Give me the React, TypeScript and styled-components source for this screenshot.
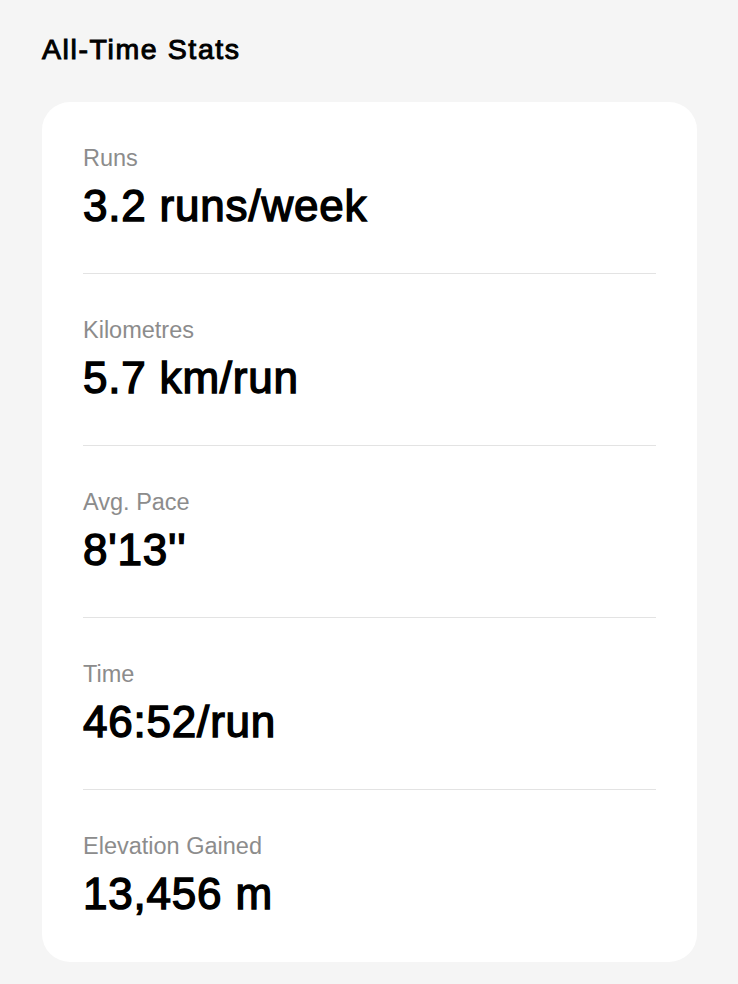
import React from "react";
import styled, { createGlobalStyle } from "styled-components";

const GlobalStyle = createGlobalStyle`
  html, body {
    margin: 0;
    padding: 0;
    background: #f5f5f5;
  }
  body {
    font-family: "Liberation Sans", Arial, Helvetica, sans-serif;
    -webkit-font-smoothing: antialiased;
  }
`;

const Page = styled.main`
  box-sizing: border-box;
  width: 738px;
  min-height: 984px;
  padding: 32px 41px 0 42px;
  background: #f5f5f5;
  display: flex;
  flex-direction: column;
`;

const Title = styled.h1`
  margin: 0 0 36px;
  font-size: 28.5px;
  line-height: 34px;
  font-weight: 400;
  color: #000;
  letter-spacing: 1.6px;
  -webkit-text-stroke: 1px #000;
`;

const Card = styled.section`
  background: #ffffff;
  border-radius: 28px;
  padding: 0 41px 42px;
  display: flex;
  flex-direction: column;
`;

const Row = styled.div<{ $last?: boolean }>`
  padding: 42px 0 ${(p) => (p.$last ? "0" : "41px")};
  border-bottom: ${(p) => (p.$last ? "none" : "1px solid #e3e3e3")};
  display: flex;
  flex-direction: column;
  gap: 8px;
`;

const Label = styled.div`
  font-size: 23.5px;
  line-height: 28px;
  color: #8c8c8c;
  font-weight: 400;
`;

const Value = styled.div`
  font-size: 44px;
  line-height: 52px;
  color: #000;
  font-weight: 400;
  letter-spacing: 0.8px;
  -webkit-text-stroke: 1.4px #000;
`;

const stats = [
  { label: "Runs", value: "3.2 runs/week" },
  { label: "Kilometres", value: "5.7 km/run" },
  { label: "Avg. Pace", value: "8'13''" },
  { label: "Time", value: "46:52/run" },
  { label: "Elevation Gained", value: "13,456 m" },
];

export default function App() {
  return (
    <>
      <GlobalStyle />
      <Page>
        <Title>All-Time Stats</Title>
        <Card>
          {stats.map((s, i) => (
            <Row key={s.label} $last={i === stats.length - 1}>
              <Label>{s.label}</Label>
              <Value>{s.value}</Value>
            </Row>
          ))}
        </Card>
      </Page>
    </>
  );
}
